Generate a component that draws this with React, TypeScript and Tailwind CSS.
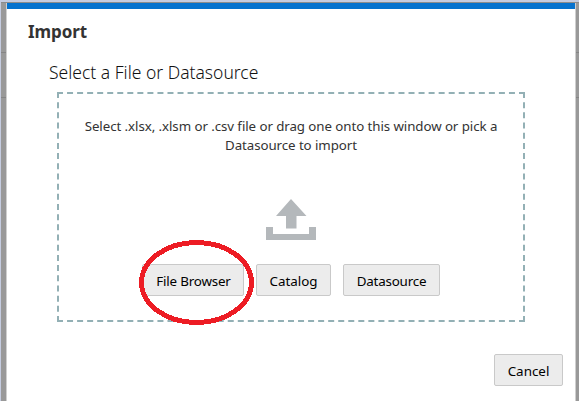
import type { ReactNode } from "react";

function Button({ children, className }: { children: ReactNode; className: string }) {
  return (
    <button
      className={`flex h-8 shrink-0 items-center justify-center whitespace-nowrap rounded-[2px] border border-[#c9c9c9] bg-[#ececec] pt-px text-[13.4px] leading-5 text-black ${className}`}
    >
      {children}
    </button>
  );
}

function UploadIcon() {
  return (
    <svg className="h-[42px] w-[50px]" viewBox="0 0 50 42" fill="#b4b8bb">
      <path d="M25 0 L40.500 17 H30.500 V29.500 H20 V17 H10 Z" />
      <path d="M0 28 H7 V35 H43 V28 H50 V41 H0 Z" />
    </svg>
  );
}

export default function App() {
  return (
    <div className="flex h-[401px] w-[579px] flex-col overflow-hidden bg-[#c5cce0] pl-px pt-[2px] font-['Noto_Sans','Open_Sans',sans-serif]">
      <div className="flex min-h-0 flex-1 border-t border-[#8c8c8c] bg-[#999999]">
        <div className="w-[5px] shrink-0 pt-[49px]">
          <div className="h-[46px] border-y border-[#858585]" />
        </div>
        <main className="flex w-[570px] shrink-0 flex-col border-x border-[#cfcfcf] bg-white">
          <div className="h-[6px] shrink-0 bg-[#0572ce]" />
          <h1 className="ml-[21px] mt-[11px] h-6 whitespace-nowrap text-[17px] font-bold leading-6 text-[#333333]">
            <span className="tracking-[-0.1px]">Import</span>
          </h1>
          <h2 className="ml-[42px] mt-4 h-6 whitespace-nowrap text-[17.5px] font-light leading-6 text-[#111111]">
            Select a File or Datasource
          </h2>
          <section className="relative ml-[50px] mt-2 flex h-[230px] w-[468px] shrink-0 flex-col items-center border-2 border-dashed border-[#93b0b5]">
            <p className="mt-[23px] whitespace-nowrap text-center text-[13.3px] leading-[19px] tracking-[-0.07px] text-[#333333]">
              Select .xlsx, .xlsm or .csv file or drag one onto this window or pick a
              <br />
              Datasource to import
            </p>
            <div className="mt-11 h-[42px]">
              <UploadIcon />
            </div>
            <div className="mt-[23px] flex gap-3">
              <Button className="w-[102px] pl-px tracking-[-0.2px]">File Browser</Button>
              <Button className="w-[75px]">Catalog</Button>
              <Button className="w-[97px] tracking-[-0.2px]">Datasource</Button>
            </div>
            <svg className="pointer-events-none absolute left-[80px] top-[145px] h-[88px] w-[116px]" viewBox="0 0 116 88" fill="none" shapeRendering="crispEdges">
              <ellipse cx="57.500" cy="43.500" rx="55" ry="40" stroke="#ed1c24" strokeWidth="5" />
            </svg>
          </section>
          <div className="mr-[12px] mt-8 flex justify-end">
            <Button className="w-[69px]">Cancel</Button>
          </div>
        </main>
        <div className="flex-1 pt-[49px]">
          <div className="h-[46px] border-y border-[#858585]" />
        </div>
      </div>
    </div>
  );
}
